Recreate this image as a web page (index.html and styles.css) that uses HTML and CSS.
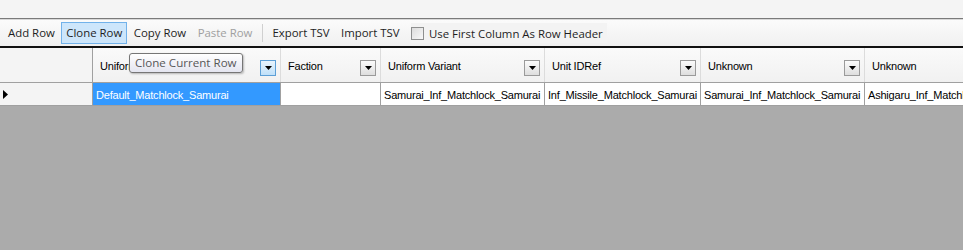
FILE: index.html
```html
<!DOCTYPE html>
<html>
<head>
<meta charset="utf-8">
<link rel="stylesheet" href="styles.css">
</head>
<body>
<div class="app">
  <div class="topstrip"></div>
  <div class="toolbar">
    <span class="tb-item">Add Row</span>
    <span class="tb-item hot">Clone Row</span>
    <span class="tb-item">Copy Row</span>
    <span class="tb-item disabled">Paste Row</span>
    <span class="tb-sep"></span>
    <span class="tb-item">Export TSV</span>
    <span class="tb-item">Import TSV</span>
    <label class="tb-check"><span class="checkbox"></span><span>Use First Column As Row Header</span></label>
  </div>
  <div class="grid">
    <div class="row head">
      <div class="rowhead"></div>
      <div class="cell c1"><span class="htext">Uniform</span><span class="dd hot"><svg width="7" height="4" viewBox="0 0 7 4"><path d="M0 0h7L3.5 4z" fill="#000"/></svg></span></div>
      <div class="cell c2"><span class="htext">Faction</span><span class="dd"><svg width="7" height="4" viewBox="0 0 7 4"><path d="M0 0h7L3.5 4z" fill="#000"/></svg></span></div>
      <div class="cell c3"><span class="htext">Uniform Variant</span><span class="dd"><svg width="7" height="4" viewBox="0 0 7 4"><path d="M0 0h7L3.5 4z" fill="#000"/></svg></span></div>
      <div class="cell c4"><span class="htext">Unit IDRef</span><span class="dd"><svg width="7" height="4" viewBox="0 0 7 4"><path d="M0 0h7L3.5 4z" fill="#000"/></svg></span></div>
      <div class="cell c5"><span class="htext">Unknown</span><span class="dd"><svg width="7" height="4" viewBox="0 0 7 4"><path d="M0 0h7L3.5 4z" fill="#000"/></svg></span></div>
      <div class="cell c6"><span class="htext">Unknown</span></div>
    </div>
    <div class="row data">
      <div class="rowhead"><svg width="5" height="9" viewBox="0 0 5 9"><path d="M0 0l5 4.5L0 9z" fill="#000"/></svg></div>
      <div class="cell c1 selected">Default_Matchlock_Samurai</div>
      <div class="cell c2"></div>
      <div class="cell c3">Samurai_Inf_Matchlock_Samurai</div>
      <div class="cell c4">Inf_Missile_Matchlock_Samurai</div>
      <div class="cell c5">Samurai_Inf_Matchlock_Samurai</div>
      <div class="cell c6">Ashigaru_Inf_Matchlock_Samurai</div>
    </div>
  </div>
  <div class="tooltip">Clone Current Row</div>
</div>
</body>
</html>
```
FILE: styles.css
```css
html, body {
  margin: 0;
  padding: 0;
  background: #ababab;
  overflow: hidden;
}
.app {
  position: relative;
  width: 963px;
  height: 250px;
  background: #ababab;
  overflow: hidden;
}
.topstrip {
  height: 18px;
  background: #f4f4f4;
  border-bottom: 1px solid #7a7a7a;
}
.toolbar {
  height: 29px;
  box-sizing: border-box;
  border-top: 1px solid #d8d8d8;
  border-bottom: 2px solid #111;
  background: linear-gradient(#fbfbfb, #f0f0f0);
  display: flex;
  align-items: center;
  padding-left: 3px;
  gap: 1.5px;
  font-family: "Open Sans", "Noto Sans", sans-serif;
  font-size: 11.4px;
  color: #1e1e1e;
}
.tb-item {
  border: 1px solid transparent;
  padding: 0 4px;
  height: 20px;
  line-height: 19px;
  white-space: nowrap;
}
.tb-item.hot {
  background: #cde6fb;
  border-color: #72b2ea;
}
.tb-item.disabled { color: #a0a0a0; }
.tb-sep {
  width: 1px;
  height: 18px;
  background: #d0d0d0;
  margin: 0 3px;
}
.tb-check {
  display: flex;
  align-items: center;
  gap: 5px;
  margin-left: 5px;
  padding-right: 4px;
  height: 20px;
  white-space: nowrap;
  background: #f3f3f3;
}
.checkbox {
  width: 11px;
  height: 11px;
  border: 1px solid #8e8f8f;
  background: linear-gradient(135deg, #dcdcdc, #f8f8f8);
}
.grid {
  font-family: "Liberation Sans", Arial, sans-serif;
  color: #000;
}
.row {
  display: flex;
  white-space: nowrap;
}
.row.head {
  height: 34px;
  background: linear-gradient(#fafafa, #f1f1f1);
  border-bottom: 1px solid #a0a0a0;
  font-size: 11px;
  letter-spacing: -0.2px;
}
.row.data {
  height: 22px;
  background: #fff;
  border-bottom: 1px solid #a0a0a0;
  font-size: 11px;
  letter-spacing: -0.2px;
}
.rowhead {
  width: 93px;
  flex: none;
  border-right: 1px solid #a0a0a0;
  background: #f4f4f4;
  display: flex;
  align-items: center;
  padding-left: 3px;
  box-sizing: border-box;
}
.cell {
  flex: none;
  box-sizing: border-box;
  border-right: 1px solid #a0a0a0;
  overflow: hidden;
  display: flex;
  align-items: center;
}
.row.head .cell {
  border-right: 1px solid #dcdcdc;
  padding-left: 7px;
  padding-top: 2px;
  justify-content: space-between;
  padding-right: 4px;
}
.row.data .cell {
  padding-left: 3px;
  padding-top: 1px;
}
.c1 { width: 188px; }
.c2 { width: 100px; }
.c3 { width: 164px; }
.c4 { width: 156px; }
.c5 { width: 164px; }
.c6 { width: 120px; }
.row.data .cell.selected {
  background: #3399ff;
  color: #fff;
}
.dd {
  width: 14px;
  height: 14px;
  border: 1px solid #9a9a9a;
  background: linear-gradient(#fbfbfb, #dedede);
  display: flex;
  align-items: center;
  justify-content: center;
  margin-top: 3px;
  flex: none;
}
.dd.hot {
  border-color: #5c9fd6;
  background: linear-gradient(#e8f4fd, #bfe0f9);
}
.tooltip {
  position: absolute;
  left: 129px;
  top: 53px;
  width: 114px;
  height: 20px;
  box-sizing: border-box;
  border: 1px solid #767676;
  border-radius: 3px;
  background: linear-gradient(#ffffff, #e4e5f0);
  box-shadow: 1px 1px 2px rgba(0,0,0,0.25);
  font-family: "Open Sans", "Noto Sans", sans-serif;
  font-size: 11.6px;
  color: #575757;
  line-height: 17px;
  padding-left: 5px;
  white-space: nowrap;
}
```
